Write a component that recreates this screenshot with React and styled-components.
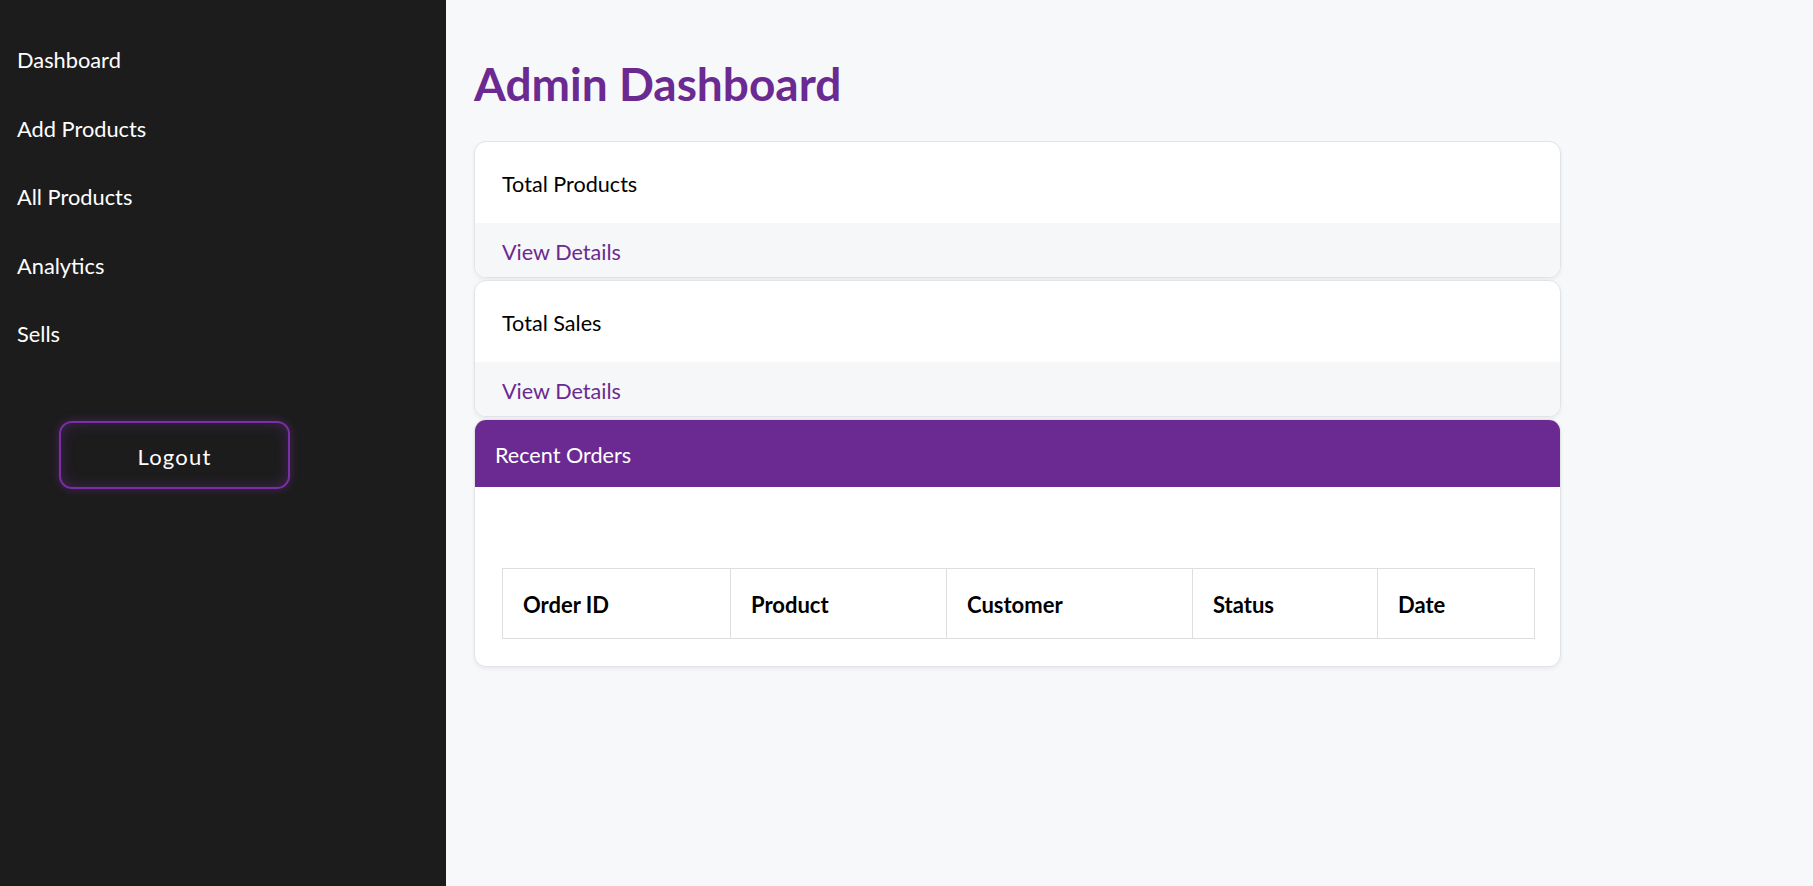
import React from 'react';
import styled, { createGlobalStyle } from 'styled-components';

const purple = '#6b2a91';

const GlobalStyle = createGlobalStyle`
  html, body {
    margin: 0;
    padding: 0;
    height: 100%;
  }
  body {
    font-family: Lato, "Open Sans", "Liberation Sans", sans-serif;
    background: #f7f8fa;
    color: #000;
  }
  * {
    box-sizing: border-box;
  }
`;

const Layout = styled.div`
  display: grid;
  grid-template-columns: 446px 1fr;
  min-height: 100vh;
`;

const Sidebar = styled.aside`
  background: #1c1c1c;
  padding-top: 26px;
`;

const NavList = styled.ul`
  list-style: none;
  margin: 0;
  padding: 0;
`;

const NavItem = styled.li`
  padding: 0 17px;
  height: 68.6px;
  line-height: 68.6px;
  font-size: 21.8px;
  color: #ffffff;
  cursor: pointer;
`;

const LogoutButton = styled.button`
  display: block;
  margin: 52px 0 0 59px;
  width: 231px;
  height: 68px;
  padding: 4px 0 0;
  background: #1c1c1c;
  border: 2px solid #7a2fa5;
  border-radius: 13px;
  color: #ffffff;
  font-family: inherit;
  font-size: 22px;
  letter-spacing: 1.2px;
  cursor: pointer;
  box-shadow: 0 0 10px rgba(122, 47, 165, 0.45), inset 0 0 14px rgba(122, 47, 165, 0.4);
`;

const Main = styled.main`
  padding: 58px 28px 40px;
`;

const Title = styled.h1`
  margin: 0 0 31px;
  font-size: 46px;
  line-height: 52px;
  font-weight: 700;
  color: ${purple};
`;

const Card = styled.section`
  max-width: 1087px;
  margin-bottom: 2px;
  background: #ffffff;
  border: 1px solid #e1e3e7;
  border-radius: 12px;
  overflow: hidden;
  box-shadow: 0 2px 4px rgba(0, 0, 0, 0.06);
`;

const CardBody = styled.div`
  display: flex;
  align-items: center;
  height: 81px;
  padding: 2px 27px 0;
  font-size: 21.6px;
`;

const CardFooter = styled.div`
  display: flex;
  align-items: center;
  height: 54px;
  padding: 3px 27px 0;
  background: #f6f7f9;
`;

const DetailsLink = styled.a`
  font-size: 21.6px;
  color: ${purple};
  text-decoration: none;
  cursor: pointer;
`;

const OrdersHeader = styled.div`
  display: flex;
  align-items: center;
  height: 67px;
  padding: 2px 20px 0;
  background: ${purple};
  color: #ffffff;
  font-size: 21.6px;
`;

const OrdersBody = styled.div`
  padding: 81px 27px 27px;
`;

const Table = styled.table`
  width: 100%;
  border-collapse: collapse;
  table-layout: fixed;
`;

const HeadCell = styled.th`
  width: ${p => p.$width}px;
  height: 70px;
  padding: 2px 20px 0;
  border: 1px solid #dedede;
  text-align: left;
  font-size: 22px;
  font-weight: 700;
`;

const navItems = ['Dashboard', 'Add Products', 'All Products', 'Analytics', 'Sells'];

const stats = ['Total Products', 'Total Sales'];

const columns = [
  { label: 'Order ID', width: 228 },
  { label: 'Product', width: 216 },
  { label: 'Customer', width: 246 },
  { label: 'Status', width: 185 },
  { label: 'Date', width: 157 },
];

const App = () => {
  return (
    <>
      <GlobalStyle />
      <Layout>
        <Sidebar>
          <NavList>
            {navItems.map(item => <NavItem key={item}>{item}</NavItem>)}
          </NavList>
          <LogoutButton>Logout</LogoutButton>
        </Sidebar>
        <Main>
          <Title>Admin Dashboard</Title>
          {stats.map(stat => (
            <Card key={stat}>
              <CardBody>{stat}</CardBody>
              <CardFooter>
                <DetailsLink>View Details</DetailsLink>
              </CardFooter>
            </Card>
          ))}
          <Card>
            <OrdersHeader>Recent Orders</OrdersHeader>
            <OrdersBody>
              <Table>
                <thead>
                  <tr>
                    {columns.map(col => (
                      <HeadCell key={col.label} $width={col.width}>{col.label}</HeadCell>
                    ))}
                  </tr>
                </thead>
              </Table>
            </OrdersBody>
          </Card>
        </Main>
      </Layout>
    </>
  );
};

export default App;
